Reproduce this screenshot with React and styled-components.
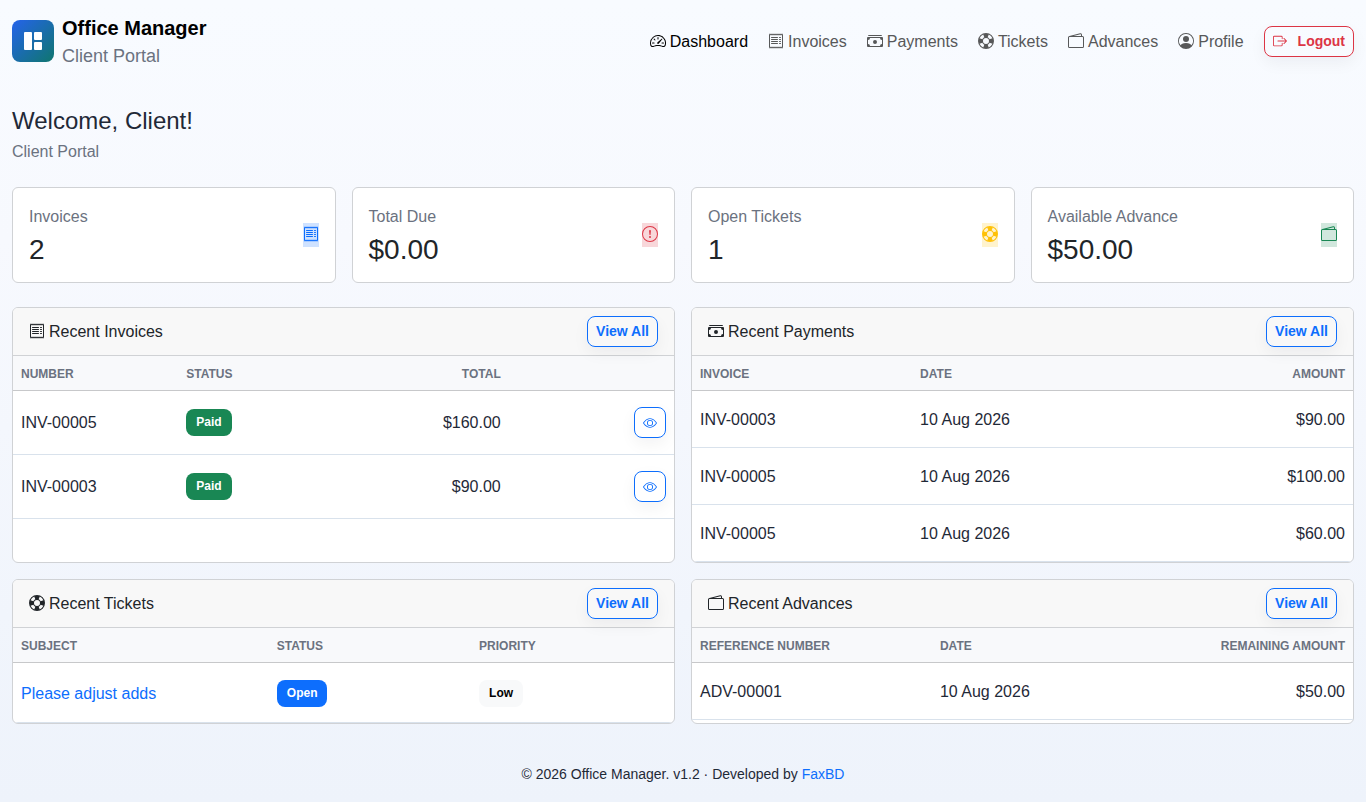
import React from "react";
import styled, { createGlobalStyle } from "styled-components";
//ICONS
import {
  BsSpeedometer2,
  BsReceipt,
  BsCashStack,
  BsLifePreserver,
  BsWallet2,
  BsPersonCircle,
  BsBoxArrowRight,
  BsExclamationCircle,
  BsEye,
} from "react-icons/bs";

const links = [
  { name: "Dashboard", icon: BsSpeedometer2, active: true },
  { name: "Invoices", icon: BsReceipt },
  { name: "Payments", icon: BsCashStack },
  { name: "Tickets", icon: BsLifePreserver },
  { name: "Advances", icon: BsWallet2 },
  { name: "Profile", icon: BsPersonCircle },
];

const stats = [
  { label: "Invoices", value: "2", icon: BsReceipt, color: "#0d6efd", tint: "#cfe2ff" },
  { label: "Total Due", value: "$0.00", icon: BsExclamationCircle, color: "#dc3545", tint: "#f8d7da" },
  { label: "Open Tickets", value: "1", icon: BsLifePreserver, color: "#ffc107", tint: "#fff3cd" },
  { label: "Available Advance", value: "$50.00", icon: BsWallet2, color: "#198754", tint: "#d1e7dd" },
];

const invoices = [
  { number: "INV-00005", status: "Paid", total: "$160.00" },
  { number: "INV-00003", status: "Paid", total: "$90.00" },
];

const payments = [
  { invoice: "INV-00003", date: "10 Aug 2026", amount: "$90.00" },
  { invoice: "INV-00005", date: "10 Aug 2026", amount: "$100.00" },
  { invoice: "INV-00005", date: "10 Aug 2026", amount: "$60.00" },
];

const Logo = () => (
  <LogoBox>
    <svg width="18" height="18" viewBox="0 0 18 18" fill="#fff" aria-hidden="true">
      <rect x="0" y="0" width="8" height="18" rx="1" />
      <rect x="10" y="0" width="8" height="8" rx="1" />
      <rect x="10" y="10" width="8" height="8" rx="1" />
    </svg>
  </LogoBox>
);

const Panel = ({ title, icon: Icon, cols, children }) => (
  <Card>
    <PanelHead>
      <PanelTitle>
        <Icon />
        {title}
      </PanelTitle>
      <OutlineLink href="#all">View All</OutlineLink>
    </PanelHead>
    <Table>
      <thead>
        <tr>
          {cols.map((col) => (
            <Th
              key={col.name}
              $width={col.width}
              $right={col.right}
              scope="col"
              aria-label={col.name || "Actions"}
            >
              {col.name}
            </Th>
          ))}
        </tr>
      </thead>
      <tbody>{children}</tbody>
    </Table>
  </Card>
);

const App = () => {
  return (
    <>
      <GlobalStyle />
      <Header>
        <Brand href="#home">
          <Logo />
          <BrandText>
            <strong>Office Manager</strong>
            <span>Client Portal</span>
          </BrandText>
        </Brand>
        <Nav>
          {links.map(({ name, icon: Icon, active }) => (
            <NavLink key={name} href={`#${name.toLowerCase()}`} $active={active}>
              <Icon />
              {name}
            </NavLink>
          ))}
          <LogoutButton type="button">
            <BsBoxArrowRight />
            Logout
          </LogoutButton>
        </Nav>
      </Header>

      <Main>
        <Welcome>
          <h1>Welcome, Client!</h1>
          <p>Client Portal</p>
        </Welcome>

        <Stats>
          {stats.map(({ label, value, icon: Icon, color, tint }) => (
            <StatCard key={label}>
              <StatText>
                <StatLabel>{label}</StatLabel>
                <StatValue>{value}</StatValue>
              </StatText>
              <StatIcon $color={color} $tint={tint}>
                <Icon />
              </StatIcon>
            </StatCard>
          ))}
        </Stats>

        <Panels>
          <Panel
            title="Recent Invoices"
            icon={BsReceipt}
            cols={[
              { name: "Number", width: "25%" },
              { name: "Status", width: "25%" },
              { name: "Total", width: "25%", right: true },
              { name: "", width: "25%" },
            ]}
          >
            {invoices.map((row) => (
              <tr key={row.number}>
                <Td $even>{row.number}</Td>
                <Td $even>
                  <Badge $bg="#198754">{row.status}</Badge>
                </Td>
                <Td $even $right>
                  {row.total}
                </Td>
                <Td $even $right>
                  <OutlineLink href={`#${row.number}`} aria-label={`View ${row.number}`}>
                    <BsEye />
                  </OutlineLink>
                </Td>
              </tr>
            ))}
          </Panel>

          <Panel
            title="Recent Payments"
            icon={BsCashStack}
            cols={[
              { name: "Invoice", width: "33.3%" },
              { name: "Date", width: "33.3%" },
              { name: "Amount", right: true },
            ]}
          >
            {payments.map((row, i) => (
              <tr key={i}>
                <Td>{row.invoice}</Td>
                <Td>{row.date}</Td>
                <Td $right>{row.amount}</Td>
              </tr>
            ))}
          </Panel>

          <Panel
            title="Recent Tickets"
            icon={BsLifePreserver}
            cols={[
              { name: "Subject", width: "38.7%" },
              { name: "Status", width: "30.6%" },
              { name: "Priority" },
            ]}
          >
            <tr>
              <Td>
                <a href="#ticket">Please adjust adds</a>
              </Td>
              <Td>
                <Badge $bg="#0d6efd">Open</Badge>
              </Td>
              <Td>
                <Badge $bg="#f8f9fa" $color="#000">
                  Low
                </Badge>
              </Td>
            </tr>
          </Panel>

          <Panel
            title="Recent Advances"
            icon={BsWallet2}
            cols={[
              { name: "Reference Number", width: "36.3%" },
              { name: "Date", width: "30%" },
              { name: "Remaining Amount", right: true },
            ]}
          >
            <tr>
              <Td>ADV-00001</Td>
              <Td>10 Aug 2026</Td>
              <Td $right>$50.00</Td>
            </tr>
          </Panel>
        </Panels>
      </Main>

      <Footer>
        © 2026 Office Manager. v1.2 · Developed by <a href="#faxbd">FaxBD</a>
      </Footer>
    </>
  );
};

const GlobalStyle = createGlobalStyle`
  *, *::before, *::after {
    box-sizing: border-box;
  }
  body {
    margin: 0;
    min-height: 100vh;
    background: linear-gradient(180deg, #f8fbff 0%, #f7f9fe 30%, #eef3fb 100%) no-repeat;
    color: #1f2937;
    font-family: "Liberation Sans", Arial, sans-serif;
    font-size: 16px;
    line-height: 24px;
  }
  h1, h2, p {
    margin: 0;
    font-weight: 400;
  }
  a {
    color: #0d6efd;
    text-decoration: none;
  }
  svg {
    flex-shrink: 0;
  }
`;

const Header = styled.header`
  display: flex;
  align-items: center;
  justify-content: space-between;
  padding: 12px;
`;

const Brand = styled.a`
  display: flex;
  align-items: center;
  gap: 8px;
`;

const LogoBox = styled.span`
  display: flex;
  align-items: center;
  justify-content: center;
  width: 42px;
  height: 42px;
  border-radius: 8px;
  background: linear-gradient(135deg, #2563eb, #0f766e);
`;

const BrandText = styled.span`
  display: flex;
  flex-direction: column;
  padding-top: 2px;
  line-height: 28px;
  strong {
    font-size: 20px;
    color: #000;
  }
  span {
    font-size: 18px;
    color: #6b7280;
  }
`;

const Nav = styled.nav`
  display: flex;
  align-items: center;
  gap: 20px;
`;

const NavLink = styled.a`
  padding-top: 2px;
  color: ${({ $active }) => ($active ? "#000" : "#575859")};
  svg {
    margin-right: 4px;
    vertical-align: -2px;
  }
`;

// shared look of the small outlined buttons
const outline = `
  display: inline-flex;
  align-items: center;
  padding: 4px 8px;
  border: 1px solid currentColor;
  border-radius: 8px;
  background: transparent;
  font-family: inherit;
  font-size: 14px;
  font-weight: 700;
  line-height: 21px;
  box-shadow: 0 6px 16px rgba(15, 23, 42, 0.05);
`;

const LogoutButton = styled.button`
  ${outline}
  gap: 11px;
  color: #dc3545;
  cursor: pointer;
`;

const OutlineLink = styled.a`
  ${outline}
  min-height: 31px;
  vertical-align: middle;
`;

const Main = styled.main`
  padding: 24px 12px 0;
`;

const Welcome = styled.div`
  margin-bottom: 23px;
  h1 {
    margin-bottom: 5px;
    font-size: 24px;
    line-height: 29px;
  }
  p {
    color: #6b7280;
  }
`;

const Card = styled.section`
  overflow: hidden;
  background: #fff;
  border: 1px solid #d0d2d5;
  border-radius: 6px;
`;

const Stats = styled.div`
  display: grid;
  grid-template-columns: repeat(4, 1fr);
  gap: 16px;
  margin-bottom: 24px;
`;

const StatCard = styled(Card)`
  display: flex;
  align-items: center;
  justify-content: space-between;
  padding: 15px 16px;
`;

const StatText = styled.div`
  padding-top: 2px;
`;

const StatLabel = styled.p`
  margin-bottom: 4px;
  color: #6b7280;
`;

const StatValue = styled.p`
  font-size: 28px;
  line-height: 34px;
  color: #212529;
`;

const StatIcon = styled.span`
  display: flex;
  height: 24px;
  padding-top: 3px;
  color: ${({ $color }) => $color};
  background: ${({ $tint }) => $tint};
`;

const Panels = styled.div`
  display: grid;
  grid-template-columns: repeat(2, 1fr);
  gap: 16px;
`;

const PanelHead = styled.div`
  display: flex;
  align-items: center;
  justify-content: space-between;
  padding: 8px 16px;
  background: #f8f8f8;
  border-bottom: 1px solid #d0d2d5;
`;

const PanelTitle = styled.h2`
  font-size: 16px;
  color: #212529;
  svg {
    margin-right: 4px;
    vertical-align: -2px;
  }
`;

const Table = styled.table`
  width: 100%;
  table-layout: fixed;
  border-collapse: separate;
  border-spacing: 0;
`;

const Th = styled.th`
  width: ${({ $width }) => $width || "auto"};
  padding: 9px 8px 7px;
  background: #f8f9fb;
  border-bottom: 1px solid #c7c8ca;
  color: #6b7280;
  font-size: 12px;
  line-height: 18px;
  text-align: ${({ $right }) => ($right ? "right" : "left")};
  text-transform: uppercase;
`;

const Td = styled.td`
  padding: ${({ $even }) => ($even ? "16px 8px" : "17px 8px 15px")};
  border-bottom: 1px solid #d9e2ec;
  vertical-align: middle;
  text-align: ${({ $right }) => ($right ? "right" : "left")};
`;

const Badge = styled.span`
  display: inline-block;
  padding: 7px 10px;
  border-radius: 8px;
  background: ${({ $bg }) => $bg};
  color: ${({ $color }) => $color || "#fff"};
  font-size: 12px;
  font-weight: 700;
  line-height: 13px;
`;

const Footer = styled.footer`
  padding: 40px 12px 16px;
  font-size: 14px;
  line-height: 21px;
  text-align: center;
`;

export default App;
